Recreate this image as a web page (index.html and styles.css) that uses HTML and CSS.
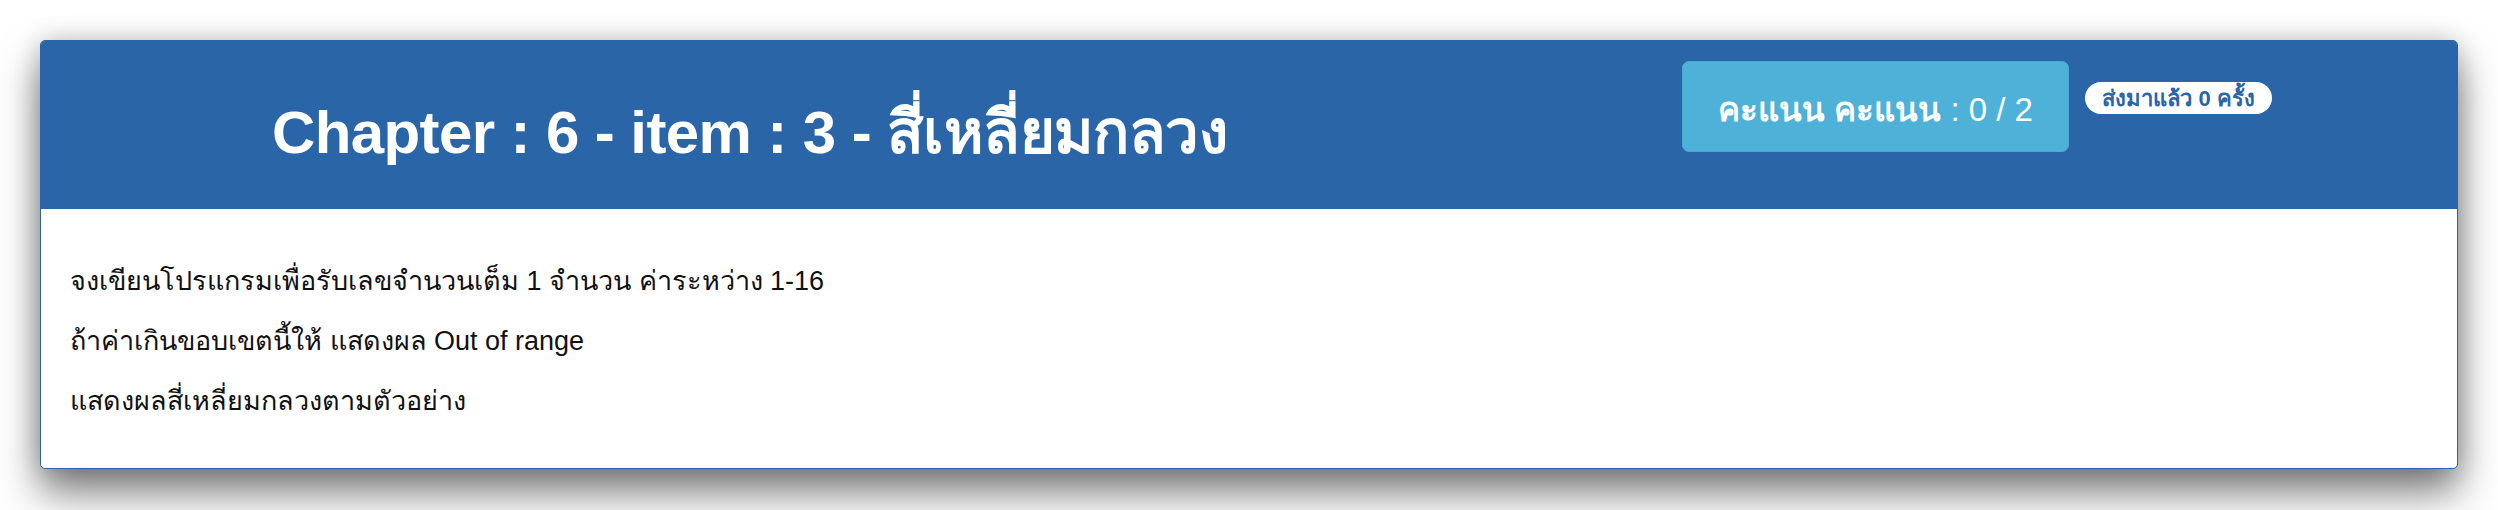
FILE: index.html
```html
<!DOCTYPE html>
<html lang="th">
<head>
<meta charset="utf-8">
<title>Chapter 6 - item 3</title>
<link rel="stylesheet" href="styles.css">
</head>
<body>
<div class="page">
  <div class="card">
    <div class="card-header">
      <h1 class="title">Chapter : 6 - item : 3 - สี่เหลี่ยมกลวง</h1>
      <div class="score"><span class="score-label">คะแนน คะแนน</span>&nbsp;: 0 / 2</div>
      <span class="sent">ส่งมาแล้ว 0 ครั้ง</span>
    </div>
    <div class="card-body">
      <p>จงเขียนโปรแกรมเพื่อรับเลขจำนวนเต็ม 1 จำนวน ค่าระหว่าง 1-16</p>
      <p>ถ้าค่าเกินขอบเขตนี้ให้ แสดงผล Out of range</p>
      <p>แสดงผลสี่เหลี่ยมกลวงตามตัวอย่าง</p>
    </div>
  </div>
</div>
</body>
</html>
```
FILE: styles.css
```css
html, body {
  margin: 0;
  padding: 0;
  background: #ffffff;
}
body {
  font-family: "Liberation Sans", Arial, sans-serif;
  color: #111;
}
.page {
  padding: 40px 40px 41px 40px;
  width: 2418px;
  min-height: 429px;
}
.card {
  width: 2418px;
  height: 429px;
  box-sizing: border-box;
  border: 1px solid #2a64a6;
  border-radius: 5px;
  background: #fff;
  overflow: hidden;
  box-shadow: 0 24px 40px rgba(0, 0, 0, 0.5), 0 0 26px rgba(0, 0, 0, 0.2);
}
.card-header {
  background: #2a65a8;
  height: 168px;
  display: flex;
  align-items: flex-start;
  padding: 0 185px 0 231px;
  box-sizing: border-box;
}
.title {
  flex: 1;
  margin: 59px 0 0 0;
  font-size: 60px;
  line-height: 66px;
  font-weight: bold;
  letter-spacing: -0.6px;
  color: #fff;
  white-space: nowrap;
}
.score {
  margin-top: 20px;
  width: 387px;
  height: 91px;
  box-sizing: border-box;
  background: #4eb2d8;
  border: 1px solid #48aad3;
  border-radius: 7px;
  color: #fff;
  font-size: 33px;
  display: flex;
  align-items: center;
  justify-content: center;
  padding-top: 6px;
  white-space: nowrap;
}
.score-label {
  font-weight: bold;
}
.sent {
  margin: 41px 0 0 16px;
  width: 187px;
  height: 32px;
  box-sizing: border-box;
  background: #fff;
  color: #2a65a8;
  border-radius: 16px;
  font-size: 22px;
  font-weight: bold;
  display: flex;
  align-items: center;
  justify-content: center;
  white-space: nowrap;
}
.card-body {
  padding: 52px 30px 0 29px;
  display: flex;
  flex-direction: column;
  gap: 20px;
}
.card-body p {
  margin: 0;
  font-size: 27px;
  line-height: 40px;
  color: #111;
}
```
